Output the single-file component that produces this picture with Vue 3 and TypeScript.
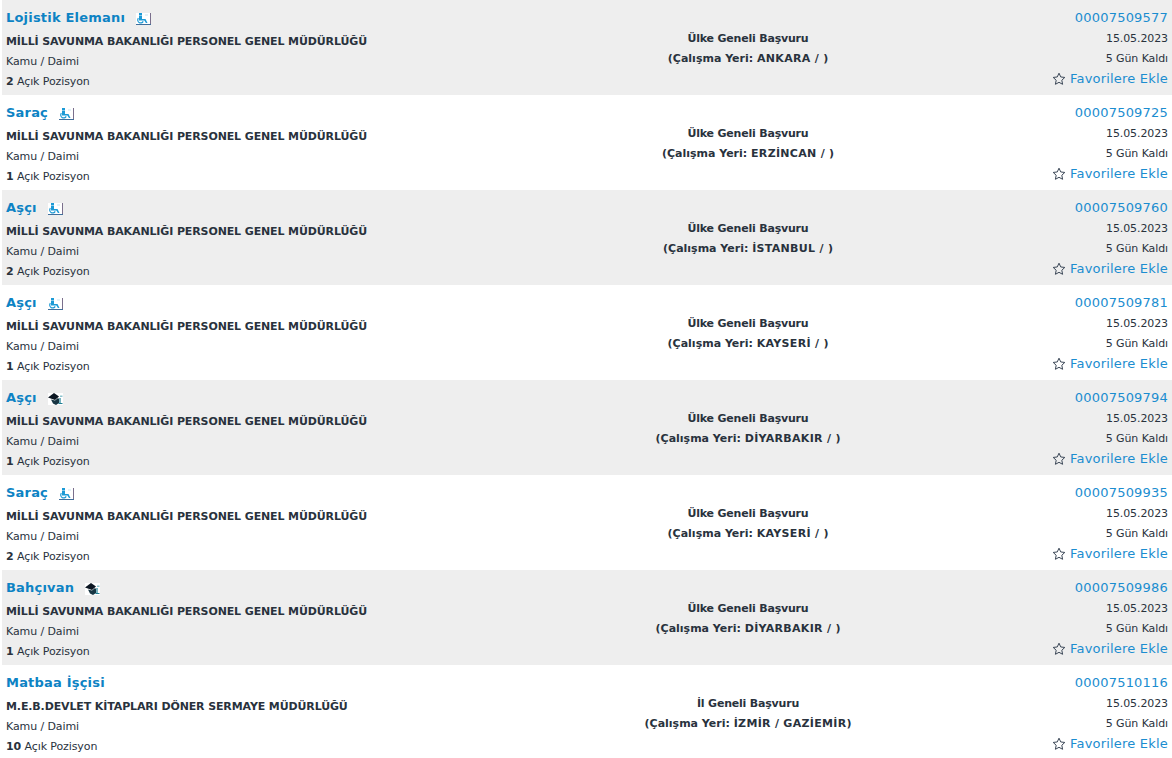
<script setup lang="ts">
interface Job {
  title: string
  icon?: 'wheel' | 'grad'
  org: string
  count: number
  scope: string
  place: string
  code: string
}

const defence = 'MİLLİ SAVUNMA BAKANLIĞI PERSONEL GENEL MÜDÜRLÜĞÜ'
const jobs: Job[] = [
  { title: 'Lojistik Elemanı', icon: 'wheel', org: defence, count: 2, scope: 'Ülke Geneli Başvuru', place: 'ANKARA / ', code: '00007509577' },
  { title: 'Saraç', icon: 'wheel', org: defence, count: 1, scope: 'Ülke Geneli Başvuru', place: 'ERZİNCAN / ', code: '00007509725' },
  { title: 'Aşçı', icon: 'wheel', org: defence, count: 2, scope: 'Ülke Geneli Başvuru', place: 'İSTANBUL / ', code: '00007509760' },
  { title: 'Aşçı', icon: 'wheel', org: defence, count: 1, scope: 'Ülke Geneli Başvuru', place: 'KAYSERİ / ', code: '00007509781' },
  { title: 'Aşçı', icon: 'grad', org: defence, count: 1, scope: 'Ülke Geneli Başvuru', place: 'DİYARBAKIR / ', code: '00007509794' },
  { title: 'Saraç', icon: 'wheel', org: defence, count: 2, scope: 'Ülke Geneli Başvuru', place: 'KAYSERİ / ', code: '00007509935' },
  { title: 'Bahçıvan', icon: 'grad', org: defence, count: 1, scope: 'Ülke Geneli Başvuru', place: 'DİYARBAKIR / ', code: '00007509986' },
  { title: 'Matbaa İşçisi', org: 'M.E.B.DEVLET KİTAPLARI DÖNER SERMAYE MÜDÜRLÜĞÜ', count: 10, scope: 'İl Geneli Başvuru', place: 'İZMİR / GAZİEMİR', code: '00007510116' },
]
</script>

<template>
  <div class="list">
    <div v-for="job in jobs" :key="job.code" class="row">
      <div class="left">
        <div class="title-line">
          <a class="title">{{ job.title }}</a>
          <svg v-if="job.icon === 'wheel'" class="icon" viewBox="0 0 15 12" width="15" height="12">
            <rect width="15" height="12" fill="#fff" />
            <path d="M14.5 0v12" stroke="#7a6f8c" fill="none" />
            <path d="M0 11.5h15" stroke="#3f6f9c" fill="none" />
            <rect x="3" y="0" width="3" height="2.5" fill="#1c9ad6" />
            <path d="M3 3h3v3h3.5l2 4h-1.6L8.4 7.6H3z" fill="#1c9ad6" />
            <path d="M2.4 5.2a2.9 2.9 0 1 0 4.8 3.2" stroke="#1c9ad6" stroke-width="1.2" fill="none" />
            <path d="M9 1h3v2H9z" fill="#e3f2f9" />
          </svg>
          <svg v-else-if="job.icon === 'grad'" class="icon" viewBox="0 0 15 12" width="15" height="12">
            <rect width="15" height="12" fill="#fff" />
            <path d="M0 4.5L6 0l5 3.5-4 3.5z" fill="#0c1622" />
            <path d="M3 6.5l4 1 3-2.5 1 1v4L8 12 5 10.5z" fill="#173543" />
            <path d="M12 5v5M10.5 10.5h4" stroke="#1f7f93" stroke-width="1.2" fill="none" />
            <path d="M12 2.5h2.5V4H12z" fill="#8fc4cf" />
          </svg>
        </div>
        <div class="org">{{ job.org }}</div>
        <div class="small">Kamu / Daimi</div>
        <div class="small"><b>{{ job.count }}</b> Açık Pozisyon</div>
      </div>
      <div class="middle">
        <div class="scope">{{ job.scope }}</div>
        <div>(Çalışma Yeri: <span class="place">{{ job.place }}</span>)</div>
      </div>
      <div class="right">
        <a class="link">{{ job.code }}</a>
        <div class="small date">15.05.2023</div>
        <div class="small">5 Gün Kaldı</div>
        <a class="link fav">
          <svg viewBox="0 0 14 14" width="14" height="14">
            <path d="M7 1.2l1.75 3.75 4.05.5-3 2.8.8 4.05L7 10.3l-3.6 2 .8-4.05-3-2.8 4.05-.5z" fill="none" stroke="#3a4656" stroke-width="1" />
          </svg>
          Favorilere Ekle
        </a>
      </div>
    </div>
  </div>
</template>

<style>
body {
  background: #fff;
}
</style>

<style scoped>
.list {
  font-family: "DejaVu Sans", Verdana, sans-serif;
  color: #29323d;
  padding-left: 2px;
  height: 758px;
  overflow: hidden;
}
.row {
  height: 95px;
  display: grid;
  grid-template-columns: 490px 504px 1fr;
  padding: 7px 4px 0 4px;
  box-sizing: border-box;
}
.row:nth-child(odd) {
  background: #eee;
}
.title-line {
  height: 20px;
  display: flex;
  align-items: center;
  gap: 11px;
}
.title {
  font-size: 13px;
  font-weight: bold;
  color: #0d83c4;
  letter-spacing: 0.2px;
}
.icon {
  display: block;
  margin-top: 3px;
}
.org {
  font-size: 11px;
  font-weight: bold;
  line-height: 20px;
  margin-top: 5px;
  white-space: nowrap;
  letter-spacing: -0.12px;
}
.small {
  font-size: 11px;
  line-height: 20px;
  letter-spacing: -0.1px;
}
.middle {
  text-align: center;
  font-size: 11px;
  font-weight: bold;
  line-height: 20px;
  padding-top: 22px;
}
.scope {
  letter-spacing: -0.2px;
}
.place {
  letter-spacing: 0.3px;
}
.right {
  text-align: right;
  padding-top: 1px;
}
.date {
  margin-top: 1px;
}
.link {
  display: block;
  font-size: 13px;
  line-height: 20px;
  color: #1b8dd0;
  letter-spacing: 0.2px;
}
.fav {
  display: flex;
  justify-content: flex-end;
  align-items: center;
  gap: 4px;
}
</style>
